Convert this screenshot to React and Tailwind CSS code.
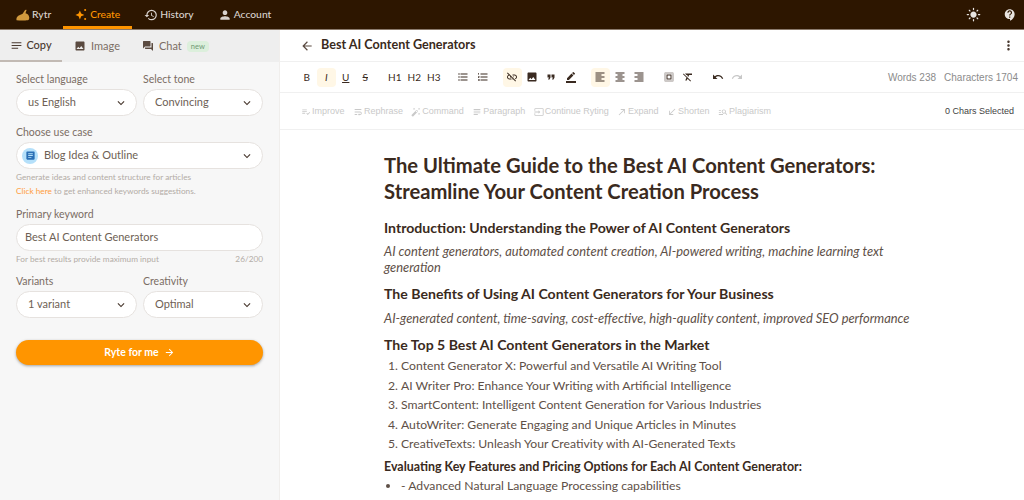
import React from "react";
import {
  MdHistory, MdPerson, MdLightMode, MdContactSupport, MdNotes, MdImage, MdQuestionAnswer,
  MdArrowBack, MdMoreVert, MdFormatListBulleted, MdFormatListNumbered, MdLinkOff,
  MdFormatQuote, MdBorderColor, MdFormatAlignLeft, MdFormatAlignCenter, MdFormatAlignRight,
  MdSelectAll, MdFormatClear, MdUndo, MdRedo, MdExpandMore, MdArrowForward, MdArticle,
  MdPlaylistAddCheck, MdWrapText, MdAutoFixHigh, MdSubject, MdInput, MdCallMade, MdCallReceived, MdManageSearch,
} from "react-icons/md";

function Spark({ className }) {
  return (
    <svg viewBox="0 0 16 16" className={className} fill="currentColor">
      <path d="M6 3l1.6 3.9L11.5 8.5 7.6 10.1 6 14 4.4 10.1 .5 8.5l3.9-1.6z" />
      <circle cx="12.5" cy="2.5" r="1.3" />
      <circle cx="12.5" cy="13.5" r="1.3" />
    </svg>
  );
}

function Logo() {
  return (
    <svg viewBox="0 0 16 13" className="w-[14px] h-[12px]" fill="#d19a3e">
      <path d="M.6 12.6c-.5-2 .3-4 2-5.2l5-2.2 2.6-4.2c.5-.8 1.4-.8 1.9-.1l-1.3 3.7c2.300.3 4 2 4.300 4.600.2 1.600-.4 3.200-1.700 3.400-3 .4-9 .4-12.800 0z" />
    </svg>
  );
}

function NavItem({ icon, label, active }) {
  return (
    <div className={`h-full flex items-center gap-[2px] text-[10.3px] font-medium ${active ? "px-3 text-[#ff9500] border-b-[3px] border-[#ff9500] pt-[3px]" : "px-3 text-[#d9d2cd]"}`}>
      {icon}
      <span>{label}</span>
    </div>
  );
}

function Select({ value, className = "" }) {
  return (
    <div className={`h-[27px] bg-white border border-[#e6e2df] rounded-full flex items-center justify-between pl-[11px] pr-[8px] text-[11px] text-[#6e5f55] ${className}`}>
      <span>{value}</span>
      <MdExpandMore className="text-[#4a3a30] text-[14px]" />
    </div>
  );
}

function Label({ children }) {
  return <div className="text-[10.5px] leading-[13px] mb-[3px] text-[#7b6d64]">{children}</div>;
}

function AiAction({ icon, label }) {
  return (
    <div className="flex items-center gap-px">
      {icon}
      <span>{label}</span>
    </div>
  );
}

function Tool({ children, active, className = "" }) {
  return (
    <div className={`w-[19.5px] h-[19px] flex items-center justify-center rounded-sm text-[#3a2a20] ${active ? "bg-[#fff7e6]" : ""} ${className}`}>
      {children}
    </div>
  );
}

export default function App() {
  const topFive = [
    "Content Generator X: Powerful and Versatile AI Writing Tool",
    "AI Writer Pro: Enhance Your Writing with Artificial Intelligence",
    "SmartContent: Intelligent Content Generation for Various Industries",
    "AutoWriter: Generate Engaging and Unique Articles in Minutes",
    "CreativeTexts: Unleash Your Creativity with AI-Generated Texts",
  ];

  return (
    <div className="w-[1024px] h-[500px] overflow-hidden flex flex-col bg-white font-['Lato',sans-serif]">
      {/* top nav */}
      <div className="h-[30px] shrink-0 bg-[#2d1600] border-b border-[#8a7a6c] flex items-center pl-[4px] pr-[7px]">
        <NavItem icon={<Logo />} label="Rytr" />
        <NavItem active icon={<Spark className="w-[13px] h-[13px]" />} label="Create" />
        <NavItem icon={<MdHistory className="text-[14px]" />} label="History" />
        <NavItem icon={<MdPerson className="text-[14px]" />} label="Account" />
        <div className="ml-auto flex items-center gap-[22px] text-[#e8e4e0]">
          <MdLightMode className="text-[15px]" />
          <MdContactSupport className="text-[14px]" />
        </div>
      </div>

      <div className="flex-1 flex min-h-0">
        {/* sidebar */}
        <div className="w-[280px] shrink-0 bg-[#f7f7f7] border-r border-[#f0eeec]">
          <div className="h-[32px] bg-[#eeeeee] flex items-center text-[11px] text-[#7b6d64]">
            <div className="w-[62px] h-full flex items-center justify-center gap-[3px] border-b-2 border-[#c2bab4] text-[#4a3a30] font-medium">
              <MdNotes className="text-[13px]" />
              <span>Copy</span>
            </div>
            <div className="ml-[12px] flex items-center gap-[5px]">
              <MdImage className="text-[12px] text-[#5a4a40]" />
              <span>Image</span>
            </div>
            <div className="ml-[22px] flex items-center gap-[5px]">
              <MdQuestionAnswer className="text-[12px] text-[#5a4a40]" />
              <span>Chat</span>
              <span className="px-[4px] text-[7.5px] leading-[11px] rounded bg-[#dcefdc] text-[#6f9a74]">new</span>
            </div>
          </div>

          <div className="pl-4 pr-4 pt-[11px]">
            <div className="grid grid-cols-[121px_120px] gap-x-[6px]">
              <div>
                <Label>Select language</Label>
                <Select value="us English" />
              </div>
              <div>
                <Label>Select tone</Label>
                <Select value="Convincing" />
              </div>
            </div>

            <div className="mt-[10px] w-[247px]">
              <Label>Choose use case</Label>
              <div className="h-[27px] bg-white border border-[#e6e2df] rounded-full flex items-center justify-between pl-[5px] pr-[8px] text-[11px] text-[#6e5f55]">
                <div className="flex items-center gap-[6px]">
                  <span className="w-[16px] h-[16px] rounded-full bg-[#b5e0fa] flex items-center justify-center">
                    <MdArticle className="text-[11px] text-[#2a6fb5]" />
                  </span>
                  <span>Blog Idea &amp; Outline</span>
                </div>
                <MdExpandMore className="text-[#4a3a30] text-[14px]" />
              </div>
              <div className="mt-[1px] text-[8.25px] leading-[14px] text-[#b3aca6]">
                Generate ideas and content structure for articles
              </div>
              <div className="text-[8.25px] leading-[14px] text-[#b3aca6]">
                <span className="text-[#ff9d3c]">Click here</span> to get enhanced keywords suggestions.
              </div>
            </div>

            <div className="mt-[10px] w-[247px]">
              <Label>Primary keyword</Label>
              <div className="h-[27px] bg-white border border-[#e6e2df] rounded-full flex items-center px-[8px] text-[11px] text-[#6e5f55]">
                Best AI Content Generators
              </div>
              <div className="mt-[2px] flex justify-between text-[8.25px] leading-[12px] text-[#b3aca6]">
                <span>For best results provide maximum input</span>
                <span>26/200</span>
              </div>
            </div>

            <div className="mt-[10px] grid grid-cols-[121px_120px] gap-x-[6px]">
              <div>
                <Label>Variants</Label>
                <Select value="1 variant" />
              </div>
              <div>
                <Label>Creativity</Label>
                <Select value="Optimal" />
              </div>
            </div>

            <div className="mt-[22px] w-[247px] h-[25px] rounded-full bg-[#ff9500] shadow-[0_1px_3px_rgba(0,0,0,0.35)] flex items-center justify-center gap-[5px] text-white text-[10.5px] font-bold">
              <span>Ryte for me</span>
              <MdArrowForward className="text-[11px]" />
            </div>
          </div>
        </div>

        {/* editor */}
        <div className="flex-1 min-w-0 flex flex-col">
          <div className="h-[32px] shrink-0 border-b border-[#f0f0f0] flex items-center pl-[20px] pr-[8px]">
            <MdArrowBack className="text-[14px] text-[#5a4a40]" />
            <span className="ml-[7px] text-[12.6px] font-bold text-[#3a2a20]">Best AI Content Generators</span>
            <MdMoreVert className="ml-auto text-[15px] text-[#4a3a30]" />
          </div>

          <div className="h-[31px] shrink-0 border-b border-[#f0f0f0] flex items-center pl-[17px] pr-[6px] text-[10px] text-[#3a2a20]">
            <Tool>B</Tool>
            <Tool active className="italic">I</Tool>
            <Tool className="underline">U</Tool>
            <Tool className="line-through">S</Tool>
            <div className="ml-[10px] flex gap-0">
              <Tool>H1</Tool>
              <Tool>H2</Tool>
              <Tool>H3</Tool>
            </div>
            <div className="ml-[10px] flex">
              <Tool><MdFormatListBulleted className="text-[12px]" /></Tool>
              <Tool><MdFormatListNumbered className="text-[12px]" /></Tool>
            </div>
            <div className="ml-[10px] flex">
              <Tool active><MdLinkOff className="text-[12px]" /></Tool>
              <Tool><MdImage className="text-[12px]" /></Tool>
              <Tool><MdFormatQuote className="text-[12px]" /></Tool>
              <Tool><MdBorderColor className="text-[12px]" /></Tool>
            </div>
            <div className="ml-[10px] flex">
              <Tool active><MdFormatAlignLeft className="text-[12px]" /></Tool>
              <Tool><MdFormatAlignCenter className="text-[12px]" /></Tool>
              <Tool><MdFormatAlignRight className="text-[12px]" /></Tool>
            </div>
            <div className="ml-[10px] flex">
              <Tool><MdSelectAll className="text-[12px]" /></Tool>
              <Tool><MdFormatClear className="text-[12px]" /></Tool>
            </div>
            <div className="ml-[10px] flex">
              <Tool><MdUndo className="text-[12px]" /></Tool>
              <Tool className="text-[#c8c8c8]"><MdRedo className="text-[12px]" /></Tool>
            </div>
            <div className="ml-auto flex gap-[8px] text-[10px] text-[#8b8b8b] font-['Liberation_Sans',sans-serif]">
              <span>Words 238</span>
              <span>Characters 1704</span>
            </div>
          </div>

          <div className="h-[37px] shrink-0 border-b border-[#f0f0f0] flex items-center pl-[21px] pr-[10px] pt-px gap-[8.4px] text-[9px] text-[#c9c9c9] font-['Liberation_Sans',sans-serif]">
            <AiAction icon={<MdPlaylistAddCheck className="text-[10px]" />} label="Improve" />
            <AiAction icon={<MdWrapText className="text-[10px]" />} label="Rephrase" />
            <AiAction icon={<MdAutoFixHigh className="text-[10px]" />} label="Command" />
            <AiAction icon={<MdSubject className="text-[10px]" />} label="Paragraph" />
            <AiAction icon={<MdInput className="text-[10px]" />} label="Continue Ryting" />
            <AiAction icon={<MdCallMade className="text-[10px]" />} label="Expand" />
            <AiAction icon={<MdCallReceived className="text-[10px]" />} label="Shorten" />
            <AiAction icon={<MdManageSearch className="text-[10px]" />} label="Plagiarism" />
            <span className="ml-auto text-[#3f3f3f]">0 Chars Selected</span>
          </div>

          <div className="flex-1 min-h-0 overflow-hidden pl-[104px] pr-[90px] pt-[22px] text-[#3a2a20]">
            <h1 className="text-[20.2px] leading-[26px] font-bold">
              The Ultimate Guide to the Best AI Content Generators: Streamline Your Content Creation Process
            </h1>
            <h2 className="mt-[14px] text-[14.1px] leading-[20px] font-bold">Introduction: Understanding the Power of AI Content Generators</h2>
            <p className="mt-[5px] text-[12.9px] leading-[16px] italic text-[#5e5047]">
              AI content generators, automated content creation, AI-powered writing, machine learning text generation
            </p>
            <h2 className="mt-[9px] text-[14.1px] leading-[20px] font-bold">The Benefits of Using AI Content Generators for Your Business</h2>
            <p className="mt-[6px] text-[12.9px] leading-[16px] italic text-[#5e5047]">
              AI-generated content, time-saving, cost-effective, high-quality content, improved SEO performance
            </p>
            <h2 className="mt-[9px] text-[14.1px] leading-[20px] font-bold">The Top 5 Best AI Content Generators in the Market</h2>
            <ol className="mt-[1px] list-decimal pl-[17px] text-[12.2px] leading-[19.5px] text-[#5e5047]">
              {topFive.map((item) => (
                <li key={item}>{item}</li>
              ))}
            </ol>
            <h3 className="mt-[3px] text-[12.45px] leading-[20px] font-bold">Evaluating Key Features and Pricing Options for Each AI Content Generator:</h3>
            <ul className="-mt-px list-disc pl-[17px] text-[12.2px] leading-[19.5px] text-[#5e5047]">
              <li>- Advanced Natural Language Processing capabilities</li>
              <li>- Customizable templates and output formatting</li>
            </ul>
          </div>
        </div>
      </div>
    </div>
  );
}
